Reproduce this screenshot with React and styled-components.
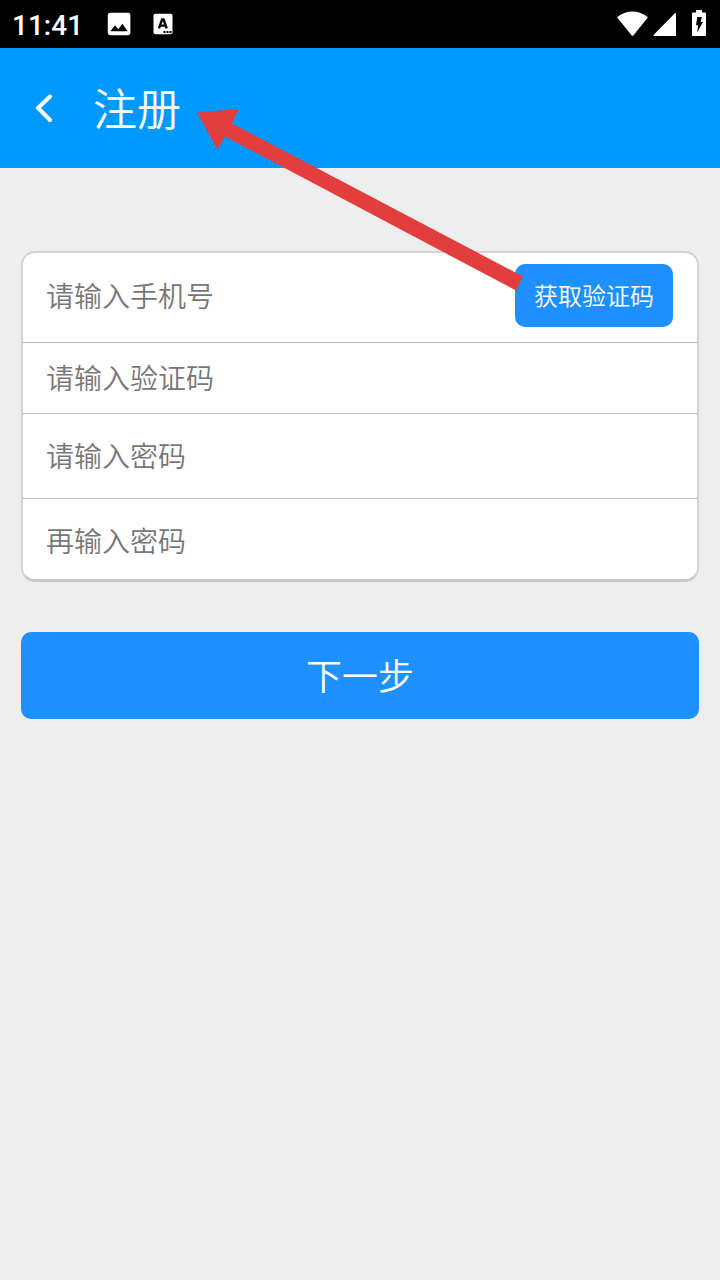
import React, { useState } from 'react';
import styled, { createGlobalStyle } from 'styled-components';

const fields = [
  { name: 'phone', type: 'tel', placeholder: '请输入手机号', height: 90, shift: 6, hasCode: true },
  { name: 'code', type: 'text', placeholder: '请输入验证码', height: 71, shift: 2 },
  { name: 'password', type: 'password', placeholder: '请输入密码', height: 85, shift: 2 },
  { name: 'confirm', type: 'password', placeholder: '再输入密码', height: 80, shift: -2 },
]

const App = () => {

  const [form, setForm] = useState({ phone: '', code: '', password: '', confirm: '' })

  const handleChange = (e) => {
    setForm({ ...form, [e.target.name]: e.target.value })
  }

  return (
    <Page>
      <GlobalStyle />
      <StatusBar>
        <StatusGroup>
          <Time>11:41</Time>
          <PictureIcon />
          <LetterIcon />
        </StatusGroup>
        <StatusGroup>
          <WifiIcon />
          <SignalIcon />
          <BatteryIcon />
        </StatusGroup>
      </StatusBar>
      <Header>
        <BackButton aria-label="返回">
          <svg width="22" height="32" viewBox="0 0 22 32" fill="none">
            <path d="M18 4.5 L6 16 L18 28" stroke="white" strokeWidth="4" strokeLinecap="round" strokeLinejoin="round" />
          </svg>
        </BackButton>
        <Title>注册</Title>
      </Header>
      <Content>
        <Card>
          {fields.map((field) => (
            <Row key={field.name} $height={field.height} $shift={field.shift}>
              <Input
                name={field.name}
                type={field.type}
                placeholder={field.placeholder}
                value={form[field.name]}
                onChange={handleChange}
              />
              {field.hasCode && <CodeButton type="button">获取验证码</CodeButton>}
            </Row>
          ))}
        </Card>
        <NextButton type="button">下一步</NextButton>
      </Content>
      <Arrow viewBox="0 0 720 1280">
        <polygon points="197,112.5 238.5,109 232,123.5 523,276.5 516,290.5 225,136.5 217.5,149.5" />
      </Arrow>
    </Page>
  )
}

export default App;

const PictureIcon = () => (
  <Icon width="24" height="24" viewBox="0 0 24 24" $left={26}>
    <rect x="0.8" y="0.8" width="22.6" height="22.4" rx="2.4" fill="white" />
    <path d="M3.4 19.2 L8 13.3 L11.3 17.2 L15.4 11.7 L20.6 19.2 Z" fill="black" />
  </Icon>
)

const LetterIcon = () => (
  <Icon width="20" height="24" viewBox="0 0 20 24" $left={22}>
    <rect x="0.5" y="1.7" width="19" height="20.6" rx="2" fill="white" />
    <path d="M6 16.4 L9.1 7.4 H10.6 L13.7 16.4 M7.2 13.6 H12.6" fill="none" stroke="black" strokeWidth="2.4" />
    <path d="M10.5 20 h2 M13.5 20 h2 M16.5 20 h2" stroke="black" strokeWidth="1.8" />
  </Icon>
)

const WifiIcon = () => (
  <Icon width="32" height="26" viewBox="0 0 32 26">
    <path d="M1 6.2 C10 -1.4 23 -1.4 32 6.2 L17.5 24.2 Q16.5 25.2 15.5 24.2 Z" fill="white" />
  </Icon>
)

const SignalIcon = () => (
  <Icon width="24" height="24" viewBox="0 0 24 24" $left={5}>
    <path d="M1.2 24 Q0 24 0.8 22.8 L21.6 1.4 Q23 0.4 23 2 V24 Z" fill="white" />
  </Icon>
)

const BatteryIcon = () => (
  <Icon width="14" height="28" viewBox="0 0 14 28" $left={15}>
    <path d="M4 0 H10 V2.6 H13 Q14 2.6 14 3.6 V25 Q14 26 13 26 H1 Q0 26 0 25 V3.6 Q0 2.6 1 2.6 H4 Z" fill="white" />
    <path d="M5.3 7 H9.8 L8.6 12 H11 L5.2 22.4 L6.2 15.2 H4 Z" fill="black" />
  </Icon>
)

const GlobalStyle = createGlobalStyle`
  * {
    box-sizing: border-box;
  }

  body {
    margin: 0;
    background-color: #eeeeee;
    font-family: "Noto Sans CJK SC", "Noto Sans", sans-serif;
    font-weight: 350;
  }

  button, input {
    font-family: inherit;
    font-weight: inherit;
    border: none;
    outline: none;
    padding: 0;
  }
`
const Page = styled.div`
  position: relative;
  display: flex;
  flex-direction: column;
  width: 720px;
  height: 1280px;
  background-color: #eeeeee;
  overflow: hidden;
`
const StatusBar = styled.div`
  display: flex;
  justify-content: space-between;
  align-items: center;
  height: 48px;
  padding: 0 14px 0 12px;
  background-color: black;
`
const StatusGroup = styled.div`
  display: flex;
  align-items: center;
`
const Time = styled.span`
  width: 69px;
  font-family: Roboto, sans-serif;
  font-size: 28px;
  font-weight: 500;
  line-height: 44px;
  padding-top: 3px;
  color: white;
`
const Icon = styled.svg`
  display: block;
  flex-shrink: 0;
  margin-left: ${({ $left }) => $left || 0}px;
`
const Header = styled.header`
  display: flex;
  align-items: center;
  height: 120px;
  padding-left: 32px;
  background-color: #0099ff;
`
const BackButton = styled.button`
  display: flex;
  width: 61px;
  background: none;
  cursor: pointer;
`
const Title = styled.h1`
  margin: 0;
  padding-bottom: 2px;
  font-size: 44px;
  font-weight: 350;
  line-height: 64px;
  color: white;
`
const Content = styled.main`
  display: flex;
  flex-direction: column;
  padding: 83px 21px 0;
`
const Card = styled.form`
  display: flex;
  flex-direction: column;
  border: 2px solid #d3d3d3;
  border-bottom: 3px solid #c8c8c8;
  border-radius: 14px;
  background-color: white;
`
const Row = styled.div`
  display: flex;
  align-items: center;
  justify-content: space-between;
  height: ${({ $height }) => $height}px;
  padding: 0 24px 0 23px;
  padding-bottom: ${({ $shift }) => ($shift > 0 ? $shift : 0)}px;
  padding-top: ${({ $shift }) => ($shift < 0 ? -$shift : 0)}px;
  border-bottom: 1px solid #bdbdbd;

  &:last-child {
    border-bottom: none;
  }
`
const Input = styled.input`
  flex: 1;
  min-width: 0;
  height: 42px;
  font-size: 28px;
  line-height: 42px;
  color: #333;
  background: none;

  &::placeholder {
    color: #777;
    opacity: 1;
  }
`
const CodeButton = styled.button`
  width: 158px;
  height: 63px;
  margin-top: 2px;
  padding-bottom: 2px;
  border-radius: 10px;
  font-size: 24px;
  color: white;
  background-color: #1e90ff;
  cursor: pointer;
`
const NextButton = styled.button`
  height: 87px;
  margin-top: 50px;
  padding-bottom: 3px;
  border-radius: 10px;
  font-size: 36px;
  color: white;
  background-color: #1e90ff;
  cursor: pointer;
`
const Arrow = styled.svg`
  position: absolute;
  top: 0;
  left: 0;
  width: 720px;
  height: 1280px;
  pointer-events: none;
  fill: #e33e3e;
`
